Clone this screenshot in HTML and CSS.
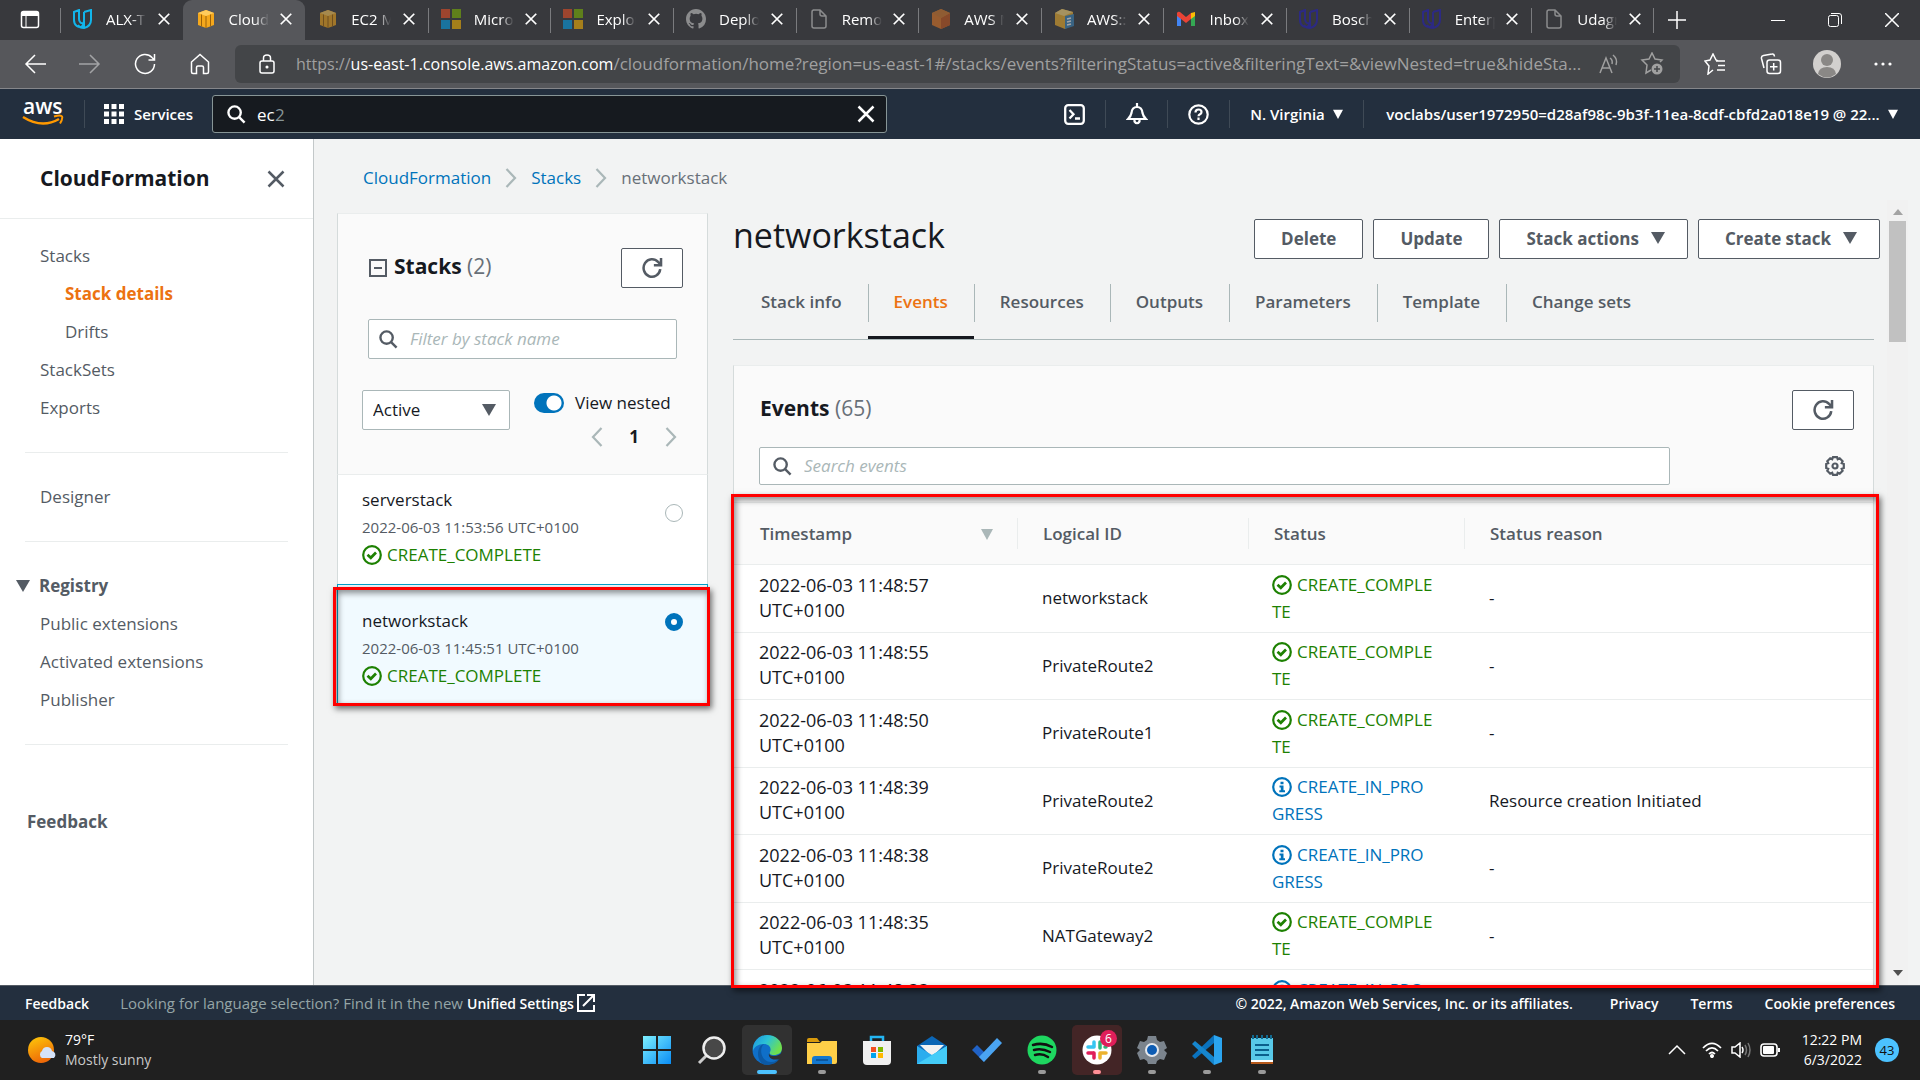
FILE: index.html
```html
<!DOCTYPE html>
<html lang="en">
<head>
<meta charset="utf-8">
<title>CloudFormation - Stack networkstack</title>
<link rel="stylesheet" href="styles.css">
</head>
<body>
<svg class="sprite" aria-hidden="true">
  <symbol id="x" viewBox="0 0 16 16"><path d="M2 2l12 12M14 2L2 14" fill="none" stroke="currentColor"/></symbol>
  <symbol id="caret" viewBox="0 0 12 12"><path d="M0 1h12L6 12z" fill="currentColor"/></symbol>
  <symbol id="search" viewBox="0 0 20 20"><g fill="none" stroke="currentColor" stroke-width="2.5"><circle cx="8" cy="8" r="6.5"/><path d="M12.500 12.500l6 6"/></g></symbol>
  <symbol id="refresh" viewBox="0 0 20 20"><path d="M17.500 11a7.600 8 0 1 1-2-6.500L18 7M18.200 1v6.500h-6.500" fill="none" stroke="currentColor" stroke-width="2.300"/></symbol>
  <symbol id="ok" viewBox="0 0 20 20"><g fill="none" stroke="currentColor" stroke-width="2.200"><circle cx="10" cy="10" r="8.800"/><path d="M5.500 9.800l3.300 3L14 7.500" stroke-width="2.700"/></g></symbol>
  <symbol id="info" viewBox="0 0 20 20"><circle cx="10" cy="10" r="8.800" fill="none" stroke="currentColor" stroke-width="2.200"/><path d="M8.500 4.800h3v2.400h-3zM7.500 8.600h4v4.600H13v2H7.300v-2h1.500v-2.700H7.500z" fill="currentColor"/></symbol>
  <symbol id="chev" viewBox="0 0 12 20"><path d="M1.500 1l8.500 9-8.500 9" fill="none" stroke="currentColor" stroke-width="2.200"/></symbol>
  <symbol id="cube" viewBox="0 0 20 20"><path d="M10 1l8 3v12l-8 3-8-3V4z" fill="#f5a81c"/><path d="M2 4l8 3 8-3-8-3z" fill="#ffcb5c"/><path d="M10 7v12M5.500 5.500v12M14.500 5.500v12" stroke="#9c6208" fill="none"/></symbol>
  <symbol id="udacity" viewBox="0 0 20 20"><path d="M1 3l5-2v9c0 3 2 5 5 4v3c-6 3-10-1-10-6zM11 3l7-2v10c0 4-3 7-7 8-3 0-5-1-6-3M11 3v8c0 4-1 6-3 7" fill="none" stroke="currentColor" stroke-width="2"/></symbol>
  <symbol id="ms" viewBox="0 0 20 20"><path d="M0 0h9v9H0z" fill="#f25022"/><path d="M11 0h9v9h-9z" fill="#7fba00"/><path d="M0 11h9v9H0z" fill="#00a4ef"/><path d="M11 11h9v9h-9z" fill="#ffb900"/></symbol>
  <symbol id="doc" viewBox="0 0 20 20"><path d="M4 1h7l6 6v10q0 2-2 2H5q-2 0-2-2V3q0-2 2-2M11 1v4q0 2 2 2h4" fill="none" stroke="#d0d0d0" stroke-width="1.500"/></symbol>
</svg>

<header class="tabstrip">
  <button class="tabmenu" aria-label="Tab actions"><svg width="20" height="20" viewBox="0 0 20 20"><rect x="1.500" y="1.500" width="17" height="16" rx="2" fill="none" stroke="#fff" stroke-width="1.500"/><path d="M1 2h18v4H1z" fill="#fff"/><path d="M6 6v11" stroke="#fff"/></svg></button>
  <nav class="tabs" aria-label="Browser tabs">
    <div class="tab bright"><svg class="fav cyan"><use href="#udacity"/></svg><span>ALX-T</span><button aria-label="Close"><svg><use href="#x"/></svg></button></div>
    <div class="tab active bright"><svg class="fav"><use href="#cube"/></svg><span>CloudF</span><button aria-label="Close"><svg><use href="#x"/></svg></button></div>
    <div class="tab nosep"><svg class="fav"><use href="#cube"/></svg><span>EC2 M</span><button aria-label="Close"><svg><use href="#x"/></svg></button></div>
    <div class="tab"><svg class="fav"><use href="#ms"/></svg><span>Micros</span><button aria-label="Close"><svg><use href="#x"/></svg></button></div>
    <div class="tab"><svg class="fav"><use href="#ms"/></svg><span>Explor</span><button aria-label="Close"><svg><use href="#x"/></svg></button></div>
    <div class="tab"><svg class="fav" viewBox="0 0 16 16"><path fill="#d0d0d0" d="M8 0C3.580 0 0 3.580 0 8c0 3.540 2.290 6.530 5.470 7.590.4.070.55-.17.55-.38v-1.490c-2.010.37-2.530-.49-2.690-.94-.09-.23-.48-.94-.82-1.130-.28-.15-.68-.52-.01-.53.63-.01 1.080.58 1.230.82.72 1.210 1.870.87 2.330.66.07-.52.28-.87.510-1.070-1.780-.2-3.640-.89-3.640-3.950 0-.87.310-1.590.82-2.150-.08-.2-.36-1.020.08-2.120 0 0 .67-.21 2.200.82a7.500 7.500 0 0 1 4 0c1.530-1.040 2.200-.82 2.200-.82.440 1.100.160 1.920.08 2.120.51.56.82 1.270.82 2.150 0 3.070-1.870 3.750-3.650 3.950.29.250.54.730.54 1.480v2.200c0 .21.150.46.550.38A8 8 0 0 0 16 8c0-4.420-3.580-8-8-8z"/></svg><span>Deploy</span><button aria-label="Close"><svg><use href="#x"/></svg></button></div>
    <div class="tab"><svg class="fav"><use href="#doc"/></svg><span>Remot</span><button aria-label="Close"><svg><use href="#x"/></svg></button></div>
    <div class="tab"><svg class="fav" viewBox="0 0 20 20"><path d="M10 0l9 4v12l-9 4-9-4V4z" fill="#e87a24"/><path d="M10 9l9-5v12l-9 4z" fill="#c9571b"/><path d="M1 4l9 5 9-5-9-4z" fill="#d67a2c"/></svg><span>AWS M</span><button aria-label="Close"><svg><use href="#x"/></svg></button></div>
    <div class="tab"><svg class="fav" viewBox="0 0 20 20"><path d="M8 0l11 3v12l-8 5-10-4V4z" fill="#f2b12c"/><path d="M1 4l9 3 9-4-11-3z" fill="#ffdb7d"/><path d="M11 7l9-2v12l-9 3z" fill="#3a87bd"/><path d="M13 10l4-1M13 13l4-1M13 16l4-1" stroke="#fff" stroke-width="1.500"/></svg><span>AWS::S</span><button aria-label="Close"><svg><use href="#x"/></svg></button></div>
    <div class="tab bright"><svg class="fav" viewBox="0 0 20 20"><path d="M1 5v12h4V9z" fill="#4285f4"/><path d="M19 5v12h-4V9z" fill="#34a853"/><path d="M15 4l4-1v4l-4 3z" fill="#fbbc04"/><path d="M1 4q1-2 3-1l6 5 5-4v6l-5 4-5-4-4-3z" fill="#ea4335"/></svg><span>Inbox</span><button aria-label="Close"><svg><use href="#x"/></svg></button></div>
    <div class="tab bright"><svg class="fav navy"><use href="#udacity"/></svg><span>Bosch</span><button aria-label="Close"><svg><use href="#x"/></svg></button></div>
    <div class="tab bright"><svg class="fav navy"><use href="#udacity"/></svg><span>Enterp</span><button aria-label="Close"><svg><use href="#x"/></svg></button></div>
    <div class="tab last"><svg class="fav"><use href="#doc"/></svg><span>Udagr</span><button aria-label="Close"><svg><use href="#x"/></svg></button></div>
  </nav>
  <button class="newtab" aria-label="New tab"><svg width="18" height="18" viewBox="0 0 18 18"><path d="M9 0v18M0 9h18" stroke="#fff" stroke-width="1.500"/></svg></button>
  <div class="winctl">
    <button aria-label="Minimize"><svg width="14" height="14"><path d="M0 7.500h14" stroke="#fff"/></svg></button>
    <button aria-label="Restore"><svg width="14" height="14" fill="none" stroke="#fff"><rect x=".5" y="2.500" width="10" height="11" rx="2"/><path d="M3 .5h8q2.500 0 2.500 2.500v8"/></svg></button>
    <button aria-label="Close window"><svg width="14" height="14"><path d="M0 0l14 14M14 0L0 14" stroke="#fff" stroke-width="1.500"/></svg></button>
  </div>
</header>

<div class="toolbar">
  <div class="navbtns">
    <button aria-label="Back"><svg width="22" height="20" viewBox="0 0 22 20"><path d="M22 10H2M11 1l-9 9 9 9"/></svg></button>
    <button class="dim" aria-label="Forward"><svg width="22" height="20" viewBox="0 0 22 20"><path d="M0 10h20M11 1l9 9-9 9"/></svg></button>
    <button aria-label="Reload"><svg width="22" height="22" viewBox="0 0 22 22"><path d="M20.500 11A9.500 9.500 0 1 1 18 4.500L20 6.500M20.500 1v6h-6"/></svg></button>
    <button aria-label="Home"><svg width="20" height="22" viewBox="0 0 20 22"><path d="M1.500 9L10 1.500 18.500 9v10q0 1.500-1.500 1.500h-3.500v-6q0-1.500-1.500-1.500H8q-1.500 0-1.500 1.500v6H3q-1.500 0-1.500-1.500z"/></svg></button>
  </div>
  <div class="address">
    <svg width="16" height="20" viewBox="0 0 16 20" fill="none" stroke="#fff" stroke-width="1.500"><rect x="1" y="7" width="14" height="12" rx="2"/><path d="M4.500 7V4a3.500 3 0 0 1 7 0v3"/><circle cx="8" cy="13" r=".8" fill="#fff"/></svg>
    <div class="url"><span class="origin">https://<b>us-east-1.console.aws.amazon.com</b></span>/cloudformation/home?region=us-east-1#/stacks/events?filteringStatus=active&amp;filteringText=&amp;viewNested=true&amp;hideSta...</div>
    <svg width="20" height="20" viewBox="0 0 20 20" fill="none" stroke="#a0a0a0" stroke-width="1.500"><path d="M1 19L7 4l6 15M3 14h8M11 4q3 2 2 6M14 1q5 4 3 10"/></svg>
    <svg width="24" height="24" viewBox="0 0 24 24" fill="none" stroke="#a0a0a0" stroke-width="1.500"><path d="M20 10l2-2-7-1-3-6-3 6-7 1 5 5-1 8 5-3"/><circle cx="17" cy="17" r="5.500" fill="#a0a0a0" stroke="none"/><path d="M17 14v6M14 17h6" stroke="#434548"/></svg>
  </div>
  <div class="edgebtns">
    <button aria-label="Favorites"><svg width="22" height="22" viewBox="0 0 22 22"><path d="M14 8l-2-1-3-6-3 6-5 1 4 5-1 8 5-4M12 8h9M14 12.500h7M13 17h8"/></svg></button>
    <button aria-label="Collections"><svg width="22" height="22" viewBox="0 0 22 22"><rect x="7" y="7" width="13.500" height="13.500" rx="2.500"/><path d="M13.700 10v7.500M10 13.700h7.500M4 15L1.500 5.500Q1 3 3.500 2.500L12 1q2-.5 2.500 2.500"/></svg></button>
    <button aria-label="Profile"><svg width="28" height="28" viewBox="0 0 28 28"><circle cx="14" cy="14" r="14" fill="#d2d0ce" stroke="none"/><circle cx="14" cy="10" r="6" fill="#8a8886" stroke="none"/><path d="M5 24q1-7 9-7t9 7q-9 7-18 0z" fill="#8a8886" stroke="none"/></svg></button>
    <button aria-label="More"><svg width="18" height="4" viewBox="0 0 18 4" class="solid"><circle cx="2" cy="2" r="1.600"/><circle cx="9" cy="2" r="1.600"/><circle cx="16" cy="2" r="1.600"/></svg></button>
  </div>
</div>

<div class="awsnav">
  <a class="logo" href="#" aria-label="AWS"><svg width="42" height="30" viewBox="0 0 42 30"><text x="1" y="15">aws</text><path d="M1 18q19 12 36 2" fill="none" stroke="#f90" stroke-width="2.500"/><path d="M32 17.500q7-2 8 0t-2 7" fill="none" stroke="#f90" stroke-width="2"/></svg></a>
  <button class="services"><svg width="20" height="20" viewBox="0 0 20 20" fill="#fff"><path d="M0 0h5v5H0zM7.500 0h5v5h-5zM15 0h5v5h-5zM0 7.500h5v5H0zM7.500 7.500h5v5h-5zM15 7.500h5v5h-5zM0 15h5v5H0zM7.500 15h5v5h-5zM15 15h5v5h-5z"/></svg>Services</button>
  <label class="awssearch"><svg width="19" height="19"><use href="#search"/></svg><input type="text" value="ec" aria-label="Search services"><span>2</span><button aria-label="Clear search"><svg width="20" height="20" stroke-width="2"><use href="#x"/></svg></button></label>
  <div class="awsright">
    <button class="ico" aria-label="CloudShell"><svg width="21" height="21" viewBox="0 0 21 21" fill="none" stroke="#fff" stroke-width="2.300"><rect x="1.200" y="1.200" width="18.600" height="18.600" rx="3"/><path d="M5.500 6l4 4.200-4 4.300M11 14.500h5"/></svg></button>
    <button class="ico" aria-label="Notifications"><svg width="22" height="22" viewBox="0 0 22 22" fill="none" stroke="#fff" stroke-width="2.200"><path d="M2 16q3-3 3.500-6Q6 4 11 4t5.500 6q.5 3 3.500 6zM11 4V0M8.500 16.500v2q2.500 3.500 5 0v-2"/></svg></button>
    <button class="ico" aria-label="Help"><svg width="21" height="21" viewBox="0 0 21 21" fill="none" stroke="#fff" stroke-width="2.200"><circle cx="10.500" cy="10.500" r="9.200"/><path d="M7.500 8.500q0-3 3-3t3 2.500q0 1.500-1.500 2.300t-1.500 2M10.500 13.500v2.500"/></svg></button>
    <button class="region">N. Virginia<svg width="10" height="10"><use href="#caret"/></svg></button>
    <button class="account">voclabs/user1972950=d28af98c-9b3f-11ea-8cdf-cbfd2a018e19 @ 22...<svg width="10" height="10"><use href="#caret"/></svg></button>
  </div>
</div>

<div class="workspace">
  <aside class="side">
    <div class="sidehead"><h2>CloudFormation</h2><button aria-label="Close navigation"><svg width="20" height="20" stroke-width="2"><use href="#x"/></svg></button></div>
    <nav>
      <ul><li><a href="#">Stacks</a></li><li class="sub"><a class="on" href="#">Stack details</a></li><li class="sub"><a href="#">Drifts</a></li><li><a href="#">StackSets</a></li><li><a href="#">Exports</a></li></ul>
      <ul><li><a href="#">Designer</a></li></ul>
      <ul><li class="group"><svg width="14" height="12" viewBox="0 0 14 12"><path d="M0 0h14L7 12z" fill="currentColor"/></svg><a href="#">Registry</a></li><li><a href="#">Public extensions</a></li><li><a href="#">Activated extensions</a></li><li><a href="#">Publisher</a></li></ul>
      <a class="fb" href="#">Feedback</a>
    </nav>
  </aside>

  <main>
    <nav class="crumbs" aria-label="Breadcrumb"><a href="#">CloudFormation</a><svg width="12" height="20"><use href="#chev"/></svg><a href="#">Stacks</a><svg width="12" height="20"><use href="#chev"/></svg><span>networkstack</span></nav>
    <div class="split">
      <section class="stacks">
        <div class="stackshead">
          <div class="row1"><svg width="18" height="18" viewBox="0 0 18 18" fill="none" stroke="#545b64" stroke-width="2"><rect x="1" y="1" width="16" height="16"/><path d="M5 9h8"/></svg><h3>Stacks <span>(2)</span></h3><button class="btn square" aria-label="Refresh stacks"><svg width="22" height="22"><use href="#refresh"/></svg></button></div>
          <label class="field"><svg width="19" height="19"><use href="#search"/></svg><input type="text" placeholder="Filter by stack name" aria-label="Filter by stack name"></label>
          <div class="row3">
            <div class="sel"><select aria-label="Status filter"><option>Active</option></select><svg width="14" height="12" viewBox="0 0 14 12"><path d="M0 0h14L7 12z" fill="currentColor"/></svg></div>
            <div class="nest">
              <label><input type="checkbox" checked>View nested</label>
              <div class="pager"><button aria-label="Previous page"><svg class="flip" width="12" height="20"><use href="#chev"/></svg></button><b>1</b><button aria-label="Next page"><svg width="12" height="20"><use href="#chev"/></svg></button></div>
            </div>
          </div>
        </div>
        <label class="stack"><span class="info"><span>serverstack</span><small>2022-06-03 11:53:56 UTC+0100</small><span class="ok"><svg width="20" height="20"><use href="#ok"/></svg>CREATE_COMPLETE</span></span><input type="radio" name="stack"></label>
        <label class="stack chosen"><span class="info"><span>networkstack</span><small>2022-06-03 11:45:51 UTC+0100</small><span class="ok"><svg width="20" height="20"><use href="#ok"/></svg>CREATE_COMPLETE</span></span><input type="radio" name="stack" checked><span class="mark"></span></label>
      </section>

      <section class="detail">
        <div class="titlebar"><h1>networkstack</h1><div class="actions"><button class="btn">Delete</button><button class="btn">Update</button><button class="btn drop">Stack actions<svg width="14" height="12" viewBox="0 0 14 12"><path d="M0 0h14L7 12z" fill="currentColor"/></svg></button><button class="btn drop">Create stack<svg width="14" height="12" viewBox="0 0 14 12"><path d="M0 0h14L7 12z" fill="currentColor"/></svg></button></div></div>
        <nav class="dtabs"><a href="#">Stack info</a><a class="on" href="#">Events</a><a href="#">Resources</a><a href="#">Outputs</a><a href="#">Parameters</a><a href="#">Template</a><a href="#">Change sets</a></nav>
        <div class="events">
          <div class="evhead"><h3>Events <span>(65)</span></h3><button class="btn square" aria-label="Refresh events"><svg width="22" height="22"><use href="#refresh"/></svg></button></div>
          <div class="evsearch"><label class="field"><svg width="19" height="19"><use href="#search"/></svg><input type="text" placeholder="Search events" aria-label="Search events"></label><button aria-label="Preferences"><svg width="20" height="20" viewBox="0 0 20 20" fill="none" stroke="#545b64" stroke-width="2.200"><path d="M8 1.200h4l.7 2 2-.9 2.900 2.900-.9 2 2.100.8v4l-2.100.8.9 2-2.900 2.900-2-.9-.7 2H8l-.8-2-2 .9-2.900-2.900.9-2-2-.8V8l2-.8-.9-2 2.900-2.900 2 .9z"/><circle cx="10" cy="10" r="2.500"/></svg></button></div>
          <table>
            <colgroup><col class="c1"><col class="c2"><col class="c3"><col></colgroup>
            <thead><tr><th><div>Timestamp<svg width="14" height="12"><use href="#caret"/></svg></div></th><th><div>Logical ID</div></th><th><div>Status</div></th><th><div>Status reason</div></th></tr></thead>
            <tbody>
              <tr><td class="ts">2022-06-03 11:48:57 UTC+0100</td><td>networkstack</td><td class="st ok"><svg width="20" height="20"><use href="#ok"/></svg>CREATE_COMPLE<wbr>TE</td><td>-</td></tr>
              <tr><td class="ts">2022-06-03 11:48:55 UTC+0100</td><td>PrivateRoute2</td><td class="st ok"><svg width="20" height="20"><use href="#ok"/></svg>CREATE_COMPLE<wbr>TE</td><td>-</td></tr>
              <tr><td class="ts">2022-06-03 11:48:50 UTC+0100</td><td>PrivateRoute1</td><td class="st ok"><svg width="20" height="20"><use href="#ok"/></svg>CREATE_COMPLE<wbr>TE</td><td>-</td></tr>
              <tr><td class="ts">2022-06-03 11:48:39 UTC+0100</td><td>PrivateRoute2</td><td class="st prog"><svg width="20" height="20"><use href="#info"/></svg>CREATE_IN_PRO<wbr>GRESS</td><td>Resource creation Initiated</td></tr>
              <tr><td class="ts">2022-06-03 11:48:38 UTC+0100</td><td>PrivateRoute2</td><td class="st prog"><svg width="20" height="20"><use href="#info"/></svg>CREATE_IN_PRO<wbr>GRESS</td><td>-</td></tr>
              <tr><td class="ts">2022-06-03 11:48:35 UTC+0100</td><td>NATGateway2</td><td class="st ok"><svg width="20" height="20"><use href="#ok"/></svg>CREATE_COMPLE<wbr>TE</td><td>-</td></tr>
              <tr><td class="ts">2022-06-03 11:48:33 UTC+0100</td><td></td><td class="st prog"><svg width="20" height="20"><use href="#info"/></svg>CREATE_IN_PRO<wbr>GRESS</td><td></td></tr>
            </tbody>
          </table>
        </div>
      </section>
      <div class="scroll" aria-hidden="true"><svg width="10" height="6"><path d="M0 6h10L5 0z" fill="#a3a3a3"/></svg><i></i><svg class="down" width="10" height="6"><path d="M0 0h10L5 6z" fill="#505050"/></svg></div>
    </div>
  </main>
  <div class="mark tablemark"></div>
</div>

<footer class="awsfoot">
  <a href="#">Feedback</a>
  <p>Looking for language selection? Find it in the new <a href="#">Unified Settings<svg width="18" height="18" viewBox="0 0 18 18" fill="none" stroke="#fff" stroke-width="2"><path d="M8 1H1v16h16v-6M6 12L16 2M10 1h7v7"/></svg></a></p>
  <span class="copy">© 2022, Amazon Web Services, Inc. or its affiliates.</span><a href="#">Privacy</a><a href="#">Terms</a><a href="#">Cookie preferences</a>
</footer>

<div class="taskbar">
  <div class="weather"><svg width="30" height="28" viewBox="0 0 30 28"><defs><linearGradient id="sun" x2=".4" y2="1"><stop stop-color="#fecb0a"/><stop offset="1" stop-color="#ee6a08"/></linearGradient></defs><circle cx="13" cy="14" r="13" fill="url(#sun)"/><path d="M14 22a4 4 0 0 1 0-7q1-4 5-4t5 4a4 4 0 0 1 2 7z" fill="#d5e2f8"/></svg><div>79°F<br><span>Mostly sunny</span></div></div>
  <div class="apps">
    <button aria-label="Start"><svg viewBox="0 0 30 30"><defs><linearGradient id="w" x2="1" y2="1"><stop stop-color="#7df0ff"/><stop offset="1" stop-color="#0a8df5"/></linearGradient></defs><path d="M1 1h13v13H1zM16 1h13v13H16zM1 16h13v13H1zM16 16h13v13H16z" fill="url(#w)"/></svg></button>
    <button aria-label="Search"><svg viewBox="0 0 30 30"><path d="M10 20l-8 8" stroke="#ccc" stroke-width="3"/><circle cx="17" cy="13" r="10.500" fill="#484848" stroke="#eee" stroke-width="2.500"/></svg></button>
    <button class="tile edge" aria-label="Edge"><svg viewBox="0 0 30 30"><defs><linearGradient id="e1" x2="1" y2=".5"><stop stop-color="#1b8fe0"/><stop offset=".5" stop-color="#2cc3d5"/><stop offset="1" stop-color="#6fe04e"/></linearGradient></defs><circle cx="15" cy="15" r="14.500" fill="#0f6fc8"/><path d="M1 13C2 5 8 0 15 0c9 0 15 6 15 13 0 5-4 7-8 7-3 0-5-1-4-3 2-4-1-8-6-8-6 0-10 3-11 7z" fill="url(#e1)"/><path d="M12 9c-5 4-4 17 7 18 4 0 7-2 9-4-3 5-8 7-13 7-6 0-9-6-9-11s2-9 6-10z" fill="#0c59a4"/><path d="M17 18q0 3 5 3 5 0 8-4v5l-3 2q-4 1-7 0-4-2-3-6z" fill="#313131"/></svg></button>
    <button class="run" aria-label="File Explorer"><svg viewBox="0 0 30 30"><path d="M0 5q0-2 2-2h8l3 4H0z" fill="#d99a0c"/><path d="M0 8h13l2-2h15v21q0 2-2 2H0z" fill="#ffcf48"/><path d="M5 29v-5q0-3 3-3h14q3 0 3 3v5z" fill="#1478cf"/><path d="M9 25h12" stroke="#0b4d8d" stroke-width="1.500"/></svg></button>
    <button aria-label="Store"><svg viewBox="0 0 30 30"><path d="M9 6V2h12v4" fill="none" stroke="#23b5f2" stroke-width="2.500"/><path d="M1 6h28v20q0 4-4 4H5q-4 0-4-4z" fill="#f0f0f0"/><path d="M9 12h5v5H9z" fill="#f25022"/><path d="M16 12h5v5h-5z" fill="#7fba00"/><path d="M9 18h5v5H9z" fill="#00a4ef"/><path d="M16 18h5v5h-5z" fill="#ffb900"/></svg></button>
    <button aria-label="Mail"><svg viewBox="0 0 30 30"><path d="M0 11L15 1l15 10v8H0z" fill="#0b66b5"/><path d="M3 10h24l-12 12z" fill="#f2f2f2"/><path d="M0 11l15 9 15-9v18H0z" fill="#2badee"/><path d="M0 29l30-18v18z" fill="#44ccf8"/></svg></button>
    <button aria-label="To Do"><svg viewBox="0 0 30 30"><path d="M0 15l5-5 7 7v10z" fill="#2062c6"/><path d="M12 27l-5-5L25 3l5 5z" fill="#4aa4f2"/></svg></button>
    <button class="run" aria-label="Spotify"><svg viewBox="0 0 30 30"><circle cx="15" cy="15" r="14.500" fill="#1ed760"/><path d="M6 10q10-3 19 2M7 15q8-2 16 2M8 20q7-2 13 2" fill="none" stroke="#111" stroke-width="2.500" stroke-linecap="round"/></svg></button>
    <button class="tile slack run" aria-label="Slack"><svg viewBox="0 0 30 30"><circle cx="15" cy="15" r="14.500" fill="#fff"/><g stroke-width="3.500" stroke-linecap="round"><path d="M12 7v5M6 12h6" stroke="#36c5f0"/><path d="M18 7v6M23 12h1" stroke="#2eb67d"/><path d="M18 18h6M18 18v5" stroke="#ecb22e"/><path d="M12 18v5M6 18h5" stroke="#e01e5a"/></g></svg><span>6</span></button>
    <button class="run" aria-label="Settings"><svg viewBox="0 0 30 30"><path d="M11 1h8l1 4 3 2 4-1 3 7-3 2 3 3-3 7-4-1-3 2-1 3h-8l-1-3-3-2-4 1-3-7 3-3-3-2 3-7 4 1 3-2z" fill="#7b848d"/><circle cx="15" cy="15" r="7" fill="#e5e9ee"/><circle cx="15" cy="15" r="5" fill="#0d5cb3"/></svg></button>
    <button class="run" aria-label="Visual Studio Code"><svg viewBox="0 0 30 30"><path d="M22 0v8L3 24l-3-3z" fill="#0a72bd"/><path d="M22 30v-8L3 6 0 9z" fill="#1686ce"/><path d="M22 0l8 3v24l-8 3z" fill="#2ba5f0"/></svg></button>
    <button class="run" aria-label="Notepad"><svg viewBox="0 0 30 30"><path d="M4 3h22v24H4z" fill="#58c9e8"/><path d="M4 26h22v3H4z" fill="#b5591b"/><path d="M4 25h22v2H4z" fill="#fff"/><path d="M8 10h14M8 15h14M8 20h14" stroke="#0b5f8c" stroke-width="2"/><path d="M6 0v4M10 0v4M15 0v4M20 0v4M24 0v4" stroke="#12698f" stroke-width="2"/></svg></button>
  </div>
  <div class="tray">
    <svg width="18" height="12" viewBox="0 0 18 12" fill="none" stroke="#fff" stroke-width="1.500"><path d="M1 10l8-8 8 8"/></svg>
    <svg class="wifi" width="20" height="16" viewBox="0 0 20 16" fill="none" stroke="#fff" stroke-width="1.700"><path d="M1 6q9-9 18 0M4 9q6-6 12 0M7 12q3-3 6 0"/><circle cx="10" cy="14" r="1.200" fill="#fff"/></svg>
    <svg width="20" height="16" viewBox="0 0 20 16" fill="none" stroke="#fff" stroke-width="1.500"><path d="M1 5h3l5-4v14l-5-4H1zM11 5q2 3 0 6"/><path d="M14 3q3 5 0 10M17 1q4 7 0 14" stroke="#777"/></svg>
    <svg width="20" height="14" viewBox="0 0 20 14"><rect x="1" y="1" width="16" height="12" rx="3" fill="none" stroke="#fff" stroke-width="1.600"/><rect x="3" y="3" width="11" height="8" rx="1" fill="#fff"/><path d="M18 5h2v4h-2z" fill="#fff"/></svg>
    <div class="clock">12:22 PM<br>6/3/2022</div><span class="count">43</span>
  </div>
</div>
</body>
</html>
```
FILE: styles.css
```css
* { box-sizing: border-box; }
body { margin: 0; height: 100vh; display: flex; flex-direction: column; overflow: hidden; font: 17px/25px "Open Sans", "Noto Sans", sans-serif; color: #16191f; background: #f2f3f3; }
button { font: inherit; color: inherit; background: none; border: 0; padding: 0; display: flex; align-items: center; justify-content: center; }
a { color: inherit; text-decoration: none; }
h1, h2, h3, p, ul { margin: 0; padding: 0; }
svg { flex: none; display: block; }
input, select { font: inherit; color: inherit; margin: 0; }
.sprite { position: absolute; width: 0; height: 0; }

/* Browser chrome */
.tabstrip { flex: none; height: 40px; display: flex; background: #38393d; color: #fff; font-size: 15px; }
.tabmenu { width: 60px; }
.tabs { flex: 0 1 1594px; min-width: 0; display: flex; }
.tab { flex: 1 1 0; min-width: 0; display: flex; align-items: center; padding: 0 12px 2px 13px; position: relative; }
.tab::before { content: ""; position: absolute; left: 0; top: 8px; width: 1px; height: 25px; background: #7a7b7e; }
.tab.last::after { content: ""; position: absolute; right: 0; top: 8px; width: 1px; height: 25px; background: #7a7b7e; }
.tab.active { background: #56575b; border-radius: 9px 9px 0 0; }
.tab.active::before, .tab.nosep::before { display: none; }
.fav { width: 20px; height: 20px; opacity: .55; }
.bright .fav { opacity: 1; }
.cyan { color: #12b5ea; }
.navy { color: #2c2a83; }
.tab span { flex: 0 0 40px; margin-left: 13px; overflow: hidden; white-space: nowrap; mask-image: linear-gradient(90deg, #000 65%, transparent); }
.tab button { margin-left: auto; }
.tab button svg { width: 14px; height: 14px; stroke-width: 2; }
.newtab { width: 45px; }
.winctl { margin-left: auto; display: flex; }
.winctl button { width: 57px; }
.toolbar { flex: none; height: 49px; display: flex; align-items: center; background: #56575b; border-bottom: 1px solid #85868a; color: #fff; }
.navbtns { display: flex; width: 235px; padding-left: 7px; }
.navbtns button { width: 55px; height: 40px; }
.toolbar button svg { fill: none; stroke: #fff; stroke-width: 1.5; }
.toolbar .dim { opacity: .45; }
.toolbar button svg.solid { fill: #fff; stroke: none; }
.address { flex: 1; min-width: 0; height: 38px; display: flex; align-items: center; background: #434548; border-radius: 6px; padding: 0 16px 0 24px; gap: 21px; }
.url { flex: 1; min-width: 0; white-space: nowrap; overflow: hidden; margin-right: -10px; color: #a0a0a0; }
.origin { font-size: 16px; }
.url b { font-weight: 400; color: #fff; }
.edgebtns { display: flex; width: 240px; padding-left: 7px; }
.edgebtns button { width: 56px; height: 40px; }

/* AWS top bar */
.awsnav { flex: none; height: 50px; display: flex; align-items: center; background: #232f3e; color: #fff; font-size: 15px; font-weight: 600; }
.logo { width: 84px; padding-left: 22px; }
.logo text { font: 600 21px "Open Sans", sans-serif; fill: #fff; }
.services { width: 128px; height: 28px; gap: 10px; border-left: 1px solid #3f4a56; }
.awssearch { width: 675px; height: 38px; display: flex; align-items: center; background: #161a1f; border: 1px solid #879596; border-radius: 3px; padding: 0 10px 0 14px; font-size: 17px; font-weight: 400; }
.awssearch input { width: 18px; margin-left: 11px; padding: 0; border: 0; background: none; outline: 0; }
.awssearch span { color: #879596; }
.awssearch button { margin-left: auto; }
.awsright { margin-left: auto; display: flex; }
.awsright button { height: 28px; border-left: 1px solid #3f4a56; white-space: nowrap; }
.awsright .ico { width: 62px; }
.awsright .ico:first-child { border: 0; }
.awsright svg[width="10"] { margin-left: 8px; }
.region { width: 134px; }
.account { width: 557px; }

/* Console body */
.workspace { flex: 1; min-height: 0; display: flex; position: relative; }
.side { flex: none; width: 314px; background: #fff; border-right: 1px solid #c3c8c9; color: #545b64; }
.sidehead { height: 80px; display: flex; align-items: center; justify-content: space-between; padding: 0 27px 0 40px; border-bottom: 1px solid #eaeded; }
.sidehead h2 { font-size: 21px; color: #16191f; }
.side ul { list-style: none; margin: 0 25px; padding: 24px 0 32px 15px; border-bottom: 1px solid #eaeded; display: grid; gap: 13px; }
.side ul + ul { padding-top: 31px; }
.side .sub { padding-left: 25px; }
.side .on { color: #ec7211; font-weight: 700; }
.side .group { display: flex; align-items: center; gap: 9px; margin-left: -24px; font-weight: 700; }
.fb { display: block; margin: 64px 27px; font-weight: 700; }
main { flex: 1; min-width: 0; padding-top: 26px; display: flex; flex-direction: column; }
.crumbs { display: flex; align-items: center; padding-left: 49px; gap: 14px; height: 25px; color: #687078; }
.crumbs a { color: #0073bb; }
.crumbs svg { color: #aab7b8; }
.split { flex: 1; min-height: 0; overflow: hidden; display: flex; margin-top: 10px; padding-left: 23px; }
.btn { height: 40px; padding: 0 26px 2px; background: #fff; border: 1px solid #545b64; border-radius: 2px; color: #545b64; font-weight: 700; gap: 12px; white-space: nowrap; }
.drop { padding-right: 22px; }
.square { width: 62px; padding: 0; }
h3 { font-size: 21px; padding-bottom: 4px; }
h3 span { font-weight: 400; color: #687078; }
.field { display: flex; align-items: center; height: 40px; background: #fff; border: 1px solid #aab7b8; border-radius: 2px; padding-left: 10px; color: #545b64; }
.field input { flex: 1; min-width: 0; border: 0; padding: 0 0 2px; margin-left: 12px; outline: 0; background: none; }
.field input::placeholder { font-style: italic; color: #aab7b8; }

.stacks { flex: none; width: 371px; margin-top: 13px; }
.stackshead { height: 262px; background: #fafafa; border: 1px solid #d5dbdb; border-top-color: #eaeded; border-bottom-color: #eaeded; padding: 34px 24px 0; }
.row1 { display: flex; align-items: center; padding-left: 7px; }
.row1 h3 { margin-left: 7px; }
.row1 .btn { margin-left: auto; }
.stackshead .field { margin: 31px 6px 31px; }
.row3 { display: flex; }
.sel { width: 148px; height: 40px; position: relative; color: #545b64; }
.sel select { appearance: none; width: 100%; height: 100%; background: #fff; border: 1px solid #aab7b8; border-radius: 2px; padding: 0 10px 2px; color: #16191f; }
.sel svg { position: absolute; right: 14px; top: 14px; pointer-events: none; }
.nest { flex: 1; padding-left: 24px; }
.nest label { display: flex; align-items: center; gap: 11px; white-space: nowrap; }
.nest input { appearance: none; width: 30px; height: 20px; border-radius: 10px; background: radial-gradient(circle at 20px 10px, #fff 7px, #0073bb 8px); }
.pager { display: flex; justify-content: flex-end; align-items: center; gap: 26px; margin: 9px 6px 0 0; color: #aab7b8; }
.pager b { color: #16191f; }
.flip { transform: rotate(180deg); }
.stack { display: flex; justify-content: space-between; background: #fff; border: 1px solid #d5dbdb; border-width: 0 1px; padding: 12px 24px 17px; position: relative; }
.info { display: flex; flex-direction: column; gap: 2px; }
.stack small { font-size: 15px; line-height: 26px; color: #545b64; }
.info .ok { display: flex; align-items: center; gap: 5px; }
.ok { color: #1d8102; }
.prog { color: #0073bb; }
.stack input { appearance: none; width: 18px; height: 18px; border: 1px solid #aab7b8; border-radius: 50%; background: #fff; margin-top: 17px; }
.stack.chosen { background: #f1faff; border: 1px solid #00a1c9; padding: 23px 24px 15px; }
.stack.chosen input { border: 6px solid #0073bb; margin-top: 5px; }
.mark { position: absolute; border: 3px solid #f00; box-shadow: 2px 3px 6px rgba(0,0,0,.55), inset 2px 3px 6px rgba(0,0,0,.45); pointer-events: none; z-index: 2; }
.stack .mark { inset: 2px -3px -3px -5px; }
.tablemark { left: 731px; right: 41px; top: 355px; bottom: -3px; }

.detail { flex: 1; min-width: 0; margin-left: 25px; padding-top: 19px; }
.titlebar { display: flex; justify-content: space-between; height: 40px; }
h1 { font-size: 34px; line-height: 32px; font-weight: 400; }
.actions { display: flex; gap: 10px; }
.dtabs { display: flex; margin: 25px 6px 25px 0; height: 56px; border-bottom: 1px solid #aab7b8; font-weight: 600; color: #545b64; }
.dtabs a { padding: 5px 26px; height: 55px; position: relative; white-space: nowrap; }
.dtabs a:first-child { padding-left: 28px; }
.dtabs a + a::before { content: ""; position: absolute; left: 0; top: 0; height: 38px; width: 1px; background: #aab7b8; }
.dtabs .on { color: #ec7211; border-bottom: 3px solid #16191f; }
.events { margin-right: 6px; background: #fafafa; border: 1px solid #d5dbdb; border-top-color: #eaeded; }
.evhead { display: flex; justify-content: space-between; align-items: center; height: 40px; margin: 24px 19px 17px 26px; }
.evsearch { display: flex; justify-content: space-between; align-items: center; margin: 0 28px 17px 25px; }
.evsearch .field { width: calc(100% - 175px); height: 38px; padding-left: 13px; }
table { width: 100%; border-collapse: collapse; table-layout: fixed; }
.c1 { width: 283px; }
.c2 { width: 231px; }
.c3 { width: 216px; }
thead tr { height: 62px; border: 1px solid #eaeded; border-width: 1px 0; }
th { padding: 0; text-align: left; color: #545b64; font-weight: 600; }
th div { display: flex; align-items: center; justify-content: space-between; height: 31px; padding: 0 23px 0 25px; border-left: 1px solid #eaeded; }
th:first-child div { border: 0; padding-left: 26px; }
th svg { color: #aab7b8; }
tbody tr { background: #fff; height: 67px; border-bottom: 1px solid #eaeded; }
tbody tr:nth-child(odd) { height: 68px; }
td { padding: 7px 25px 9px; }
td.ts { font-size: 18px; padding-right: 70px; }
td.st { line-height: 27px; padding: 5px 24px 7px; }
.st svg { display: inline-block; vertical-align: -4px; margin-right: 5px; }
.scroll { flex: none; width: 21px; margin: 0 12px 0 7px; background: #f1f1f1; display: flex; flex-direction: column; align-items: center; padding: 9px 0; }
.scroll i { width: 17px; height: 121px; margin-top: 6px; background: #c1c1c1; }
.scroll .down { margin-top: auto; }

.awsfoot { flex: none; height: 35px; display: flex; align-items: center; background: #232f3e; border-top: 1px solid #545b64; color: #fff; font-size: 14px; font-weight: 600; padding: 0 25px; white-space: nowrap; }
.awsfoot p { margin-left: 31px; color: #95a5a6; display: flex; gap: 4px; font-size: 15px; font-weight: 400; }
.awsfoot p a { color: #fff; font-size: 14px; font-weight: 600; display: flex; align-items: center; gap: 3px; }
.copy { margin-left: auto; }
.copy ~ a { margin-left: 32px; }
.copy + a { margin-left: 37px; }

/* Taskbar */
.taskbar { flex: none; height: 60px; display: grid; grid-template-columns: 632px 1fr auto; background: #202020; color: #fff; font-size: 14px; line-height: 20px; }
.weather { display: flex; align-items: center; gap: 7px; padding-left: 28px; }
.weather span { color: #c8c8c8; }
.apps { display: flex; align-items: center; gap: 5px; }
.apps button { width: 50px; height: 50px; border-radius: 5px; position: relative; }
.apps button > svg { width: 30px; height: 30px; }
.apps .tile { background: #313131; }
.apps .slack { background: #432526; }
.slack span { position: absolute; right: 5px; top: 5px; width: 17px; height: 17px; border-radius: 50%; background: #e01e5a; font-size: 12px; line-height: 17px; }
.run::after, .edge::after { content: ""; position: absolute; bottom: 1px; left: 21px; width: 8px; height: 4px; border-radius: 2px; background: #9a9a9a; }
.edge::after { left: 15px; width: 20px; background: #4cc2ff; }
.slack::after { background: #ff8f96; }
.tray { display: flex; align-items: center; padding-right: 21px; gap: 9px; }
.wifi { margin-left: 7px; }
.clock { margin-left: 13px; text-align: right; }
.count { width: 24px; height: 24px; border-radius: 50%; background: #4cc2ff; color: #111; text-align: center; font-size: 13px; line-height: 24px; margin-left: 4px; }
```
